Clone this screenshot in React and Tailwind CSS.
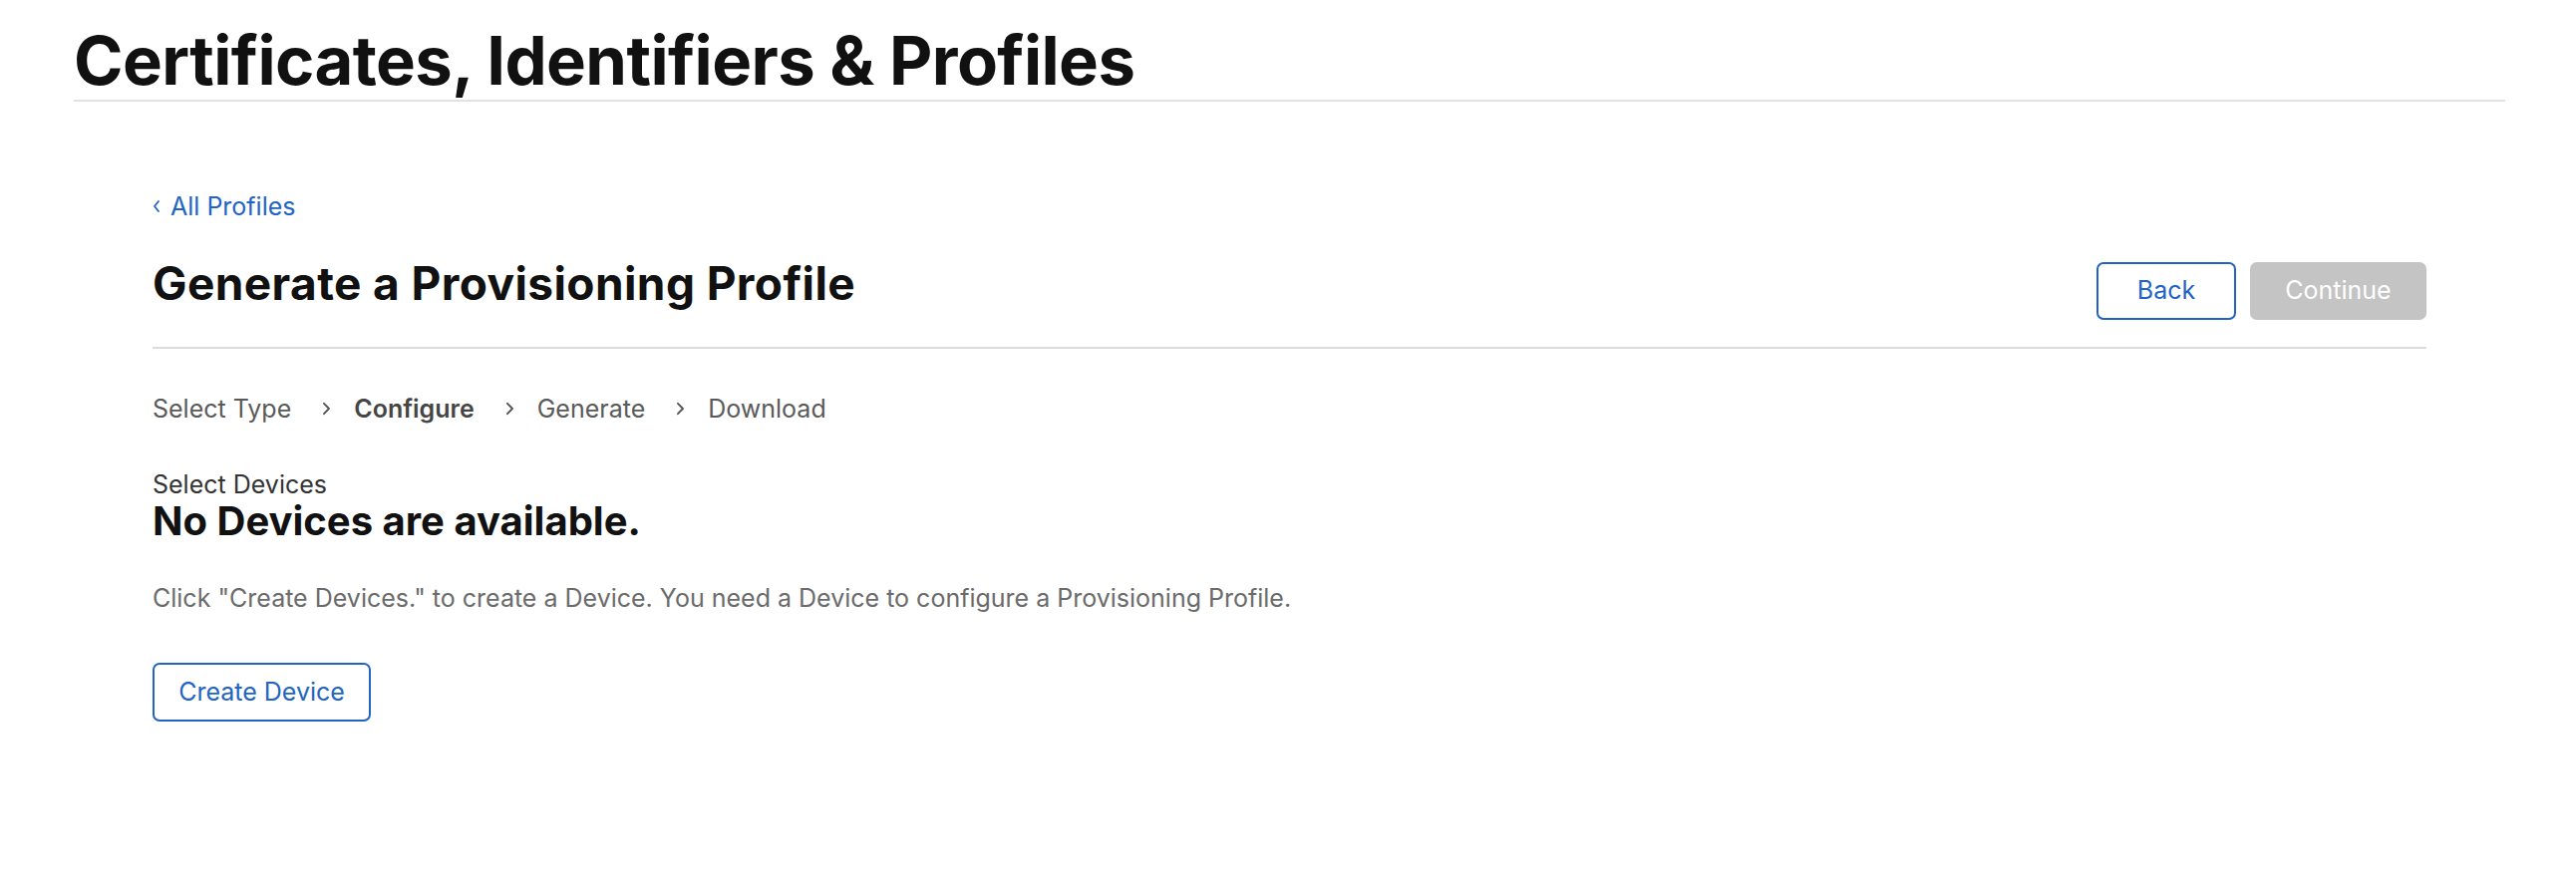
import React from 'react';

const BLUE = '#2164c4';

function Chevron({ className = '' }) {
  return (
    <svg width="10" height="14" viewBox="0 0 10 14" fill="none" className={className}>
      <path d="M3 1.8L8 7L3 12.2" stroke="#555555" strokeWidth="1.9" strokeLinecap="round" strokeLinejoin="round" />
    </svg>
  );
}

function Steps() {
  const steps = [
    { label: 'Select Type' },
    { label: 'Configure', active: true },
    { label: 'Generate' },
    { label: 'Download' },
  ];
  return (
    <div className="flex items-center text-[25px] leading-[30px] text-[#5a5a5a]">
      {steps.map((s, i) => (
        <React.Fragment key={s.label}>
          {i > 0 && <Chevron className="ml-[30px] mr-[23px]" />}
          <span className={s.active ? 'font-semibold text-[#454545]' : ''}>{s.label}</span>
        </React.Fragment>
      ))}
    </div>
  );
}

export default function App() {
  return (
    <div className="min-h-screen bg-white font-['Inter','Liberation_Sans',sans-serif] text-[#1d1d1f]">
      <div className="pl-[74px] pr-[71px]">
        {/* Page title */}
        <h1 className="pt-[27px] pb-[6px] text-[67px] leading-[67px] font-bold tracking-[-0.6px] text-[#111111] border-b-2 border-[#e2e2e2]">
          Certificates, Identifiers &amp; Profiles
        </h1>

        <div className="px-[79px]">
          <a className="mt-[90px] flex items-center gap-[10px] text-[25px] leading-[30px]" style={{ color: BLUE }}>
            <svg width="8" height="14" viewBox="0 0 8 14" fill="none">
              <path d="M6 2L2 7L6 12" stroke={BLUE} strokeWidth="1.8" strokeLinecap="round" strokeLinejoin="round" />
            </svg>
            All Profiles
          </a>

          {/* Header row */}
          <div className="mt-[35px] pb-[27px] flex items-start justify-between border-b-2 border-[#dcdcdc]">
            <h2 className="text-[46px] leading-[54px] font-bold tracking-[0.4px] text-[#111111]">Generate a Provisioning Profile</h2>
            <div className="mt-[6px] flex gap-[14px]">
              <button className="w-[140px] h-[58px] rounded-[7px] border-2 border-[#2164c4] text-[25px] text-[#2164c4] bg-white">
                Back
              </button>
              <button className="w-[177px] h-[58px] rounded-[7px] bg-[#c4c4c4] text-[25px] text-white" disabled>
                Continue
              </button>
            </div>
          </div>

          <div className="mt-[45px]">
            <Steps />
          </div>

          <div className="mt-[47px] text-[25px] leading-[28px] text-[#333333]">Select Devices</div>
          <div className="text-[40px] leading-[46px] font-bold text-[#111111]">No Devices are available.</div>

          <p className="mt-[39px] text-[25px] leading-[30px] text-[#6b6b6b]">
            Click "Create Devices." to create a Device. You need a Device to configure a Provisioning Profile.
          </p>

          <button className="mt-[50px] w-[219px] h-[59px] rounded-[7px] border-2 border-[#2164c4] text-[25px] text-[#2164c4] bg-white">
            Create Device
          </button>
        </div>
      </div>
    </div>
  );
}
